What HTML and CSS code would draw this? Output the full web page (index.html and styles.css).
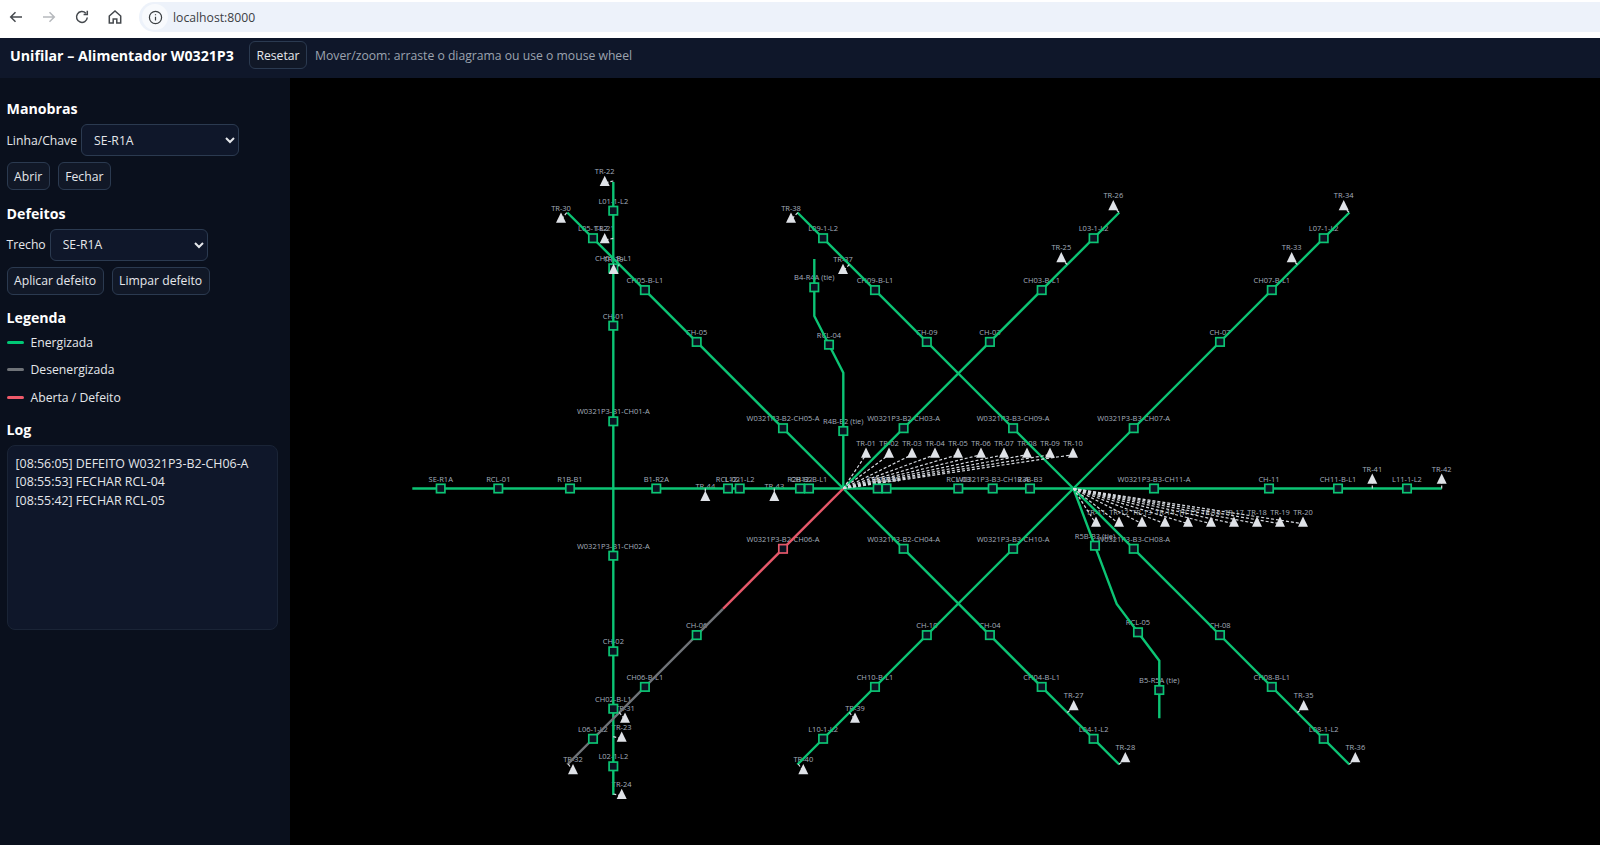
FILE: index.html
```html
<!DOCTYPE html>
<html lang="pt-BR">
<head>
    <meta charset="UTF-8">
    <meta name="viewport" content="width=device-width, initial-scale=1.0">
    <title>Unifilar - Alimentador W0321P3</title>
    <link rel="stylesheet" href="styles.css">
</head>
<body>
    <div class="browser-bar">
        <svg class="nav-icon" viewBox="0 0 16 16"><path d="M14 8H3M7.500 3.200 2.700 8l4.800 4.800"/></svg>
        <svg class="nav-icon nav-off" viewBox="0 0 16 16"><path d="M2 8h11M8.500 3.200 13.300 8l-4.800 4.800"/></svg>
        <svg class="nav-icon" viewBox="0 0 16 16"><path d="M13.300 8.500A5.400 5.400 0 1 1 11.800 4.200M13.300 1.800v3.700H9.600"/></svg>
        <svg class="nav-icon" viewBox="0 0 16 16"><path d="M2.300 7 8 2l5.700 5v7H9.800v-4H6.200v4H2.300z"/></svg>
        <div class="address">
            <span class="info-dot">
                <svg viewBox="0 0 16 16"><circle cx="8" cy="8" r="6.500"/><path d="M8 7.200v4M8 4.400v1.300"/></svg>
            </span>
            <span class="url">localhost:8000</span>
        </div>
    </div>

    <header class="topbar">
        <strong class="title">Unifilar – Alimentador W0321P3</strong>
        <button class="btn">Resetar</button>
        <span class="hint">Mover/zoom: arraste o diagrama ou use o mouse wheel</span>
    </header>

    <div class="layout">
        <aside class="sidebar">
            <section class="group">
                <h3>Manobras</h3>
                <div class="row">
                    <label for="chave">Linha/Chave</label>
                    <select id="chave" class="select-chave"><option>SE-R1A</option><option>RCL-01</option><option>R1B-B1</option></select>
                </div>
                <div class="row">
                    <button class="btn">Abrir</button>
                    <button class="btn">Fechar</button>
                </div>
            </section>

            <section class="group">
                <h3>Defeitos</h3>
                <div class="row">
                    <label for="trecho">Trecho</label>
                    <select id="trecho" class="select-trecho"><option>SE-R1A</option><option>RCL-01</option><option>R1B-B1</option></select>
                </div>
                <div class="row">
                    <button class="btn">Aplicar defeito</button>
                    <button class="btn">Limpar defeito</button>
                </div>
            </section>

            <section class="group legend">
                <h3>Legenda</h3>
                <div class="legend-item"><i class="swatch on"></i>Energizada</div>
                <div class="legend-item"><i class="swatch off"></i>Desenergizada</div>
                <div class="legend-item"><i class="swatch open"></i>Aberta / Defeito</div>
            </section>

            <section class="group">
                <h3>Log</h3>
                <div class="log">
                    <div>[08:56:05] DEFEITO W0321P3-B2-CH06-A</div>
                    <div>[08:55:53] FECHAR RCL-04</div>
                    <div>[08:55:42] FECHAR RCL-05</div>
                </div>
            </section>
        </aside>

        <main class="canvas">
            <svg id="diagram" viewBox="290 78 1310 767"></svg>
        </main>
    </div>

    <script src="app.js"></script>
</body>
</html>
```

FILE: styles.css
```css
html, body {
    height: 100%;
}
body {
    margin: 0;
    overflow: hidden;
    display: flex;
    flex-direction: column;
    font-family: "Open Sans", "Noto Sans", sans-serif;
    font-size: 12.2px;
    background-color: #000;
    color: #e5e7eb;
}
.browser-bar {
    height: 38px;
    flex: none;
    display: flex;
    align-items: center;
    box-sizing: border-box;
    padding-left: 8px;
    padding-bottom: 4px;
    background-color: #fff;
}
.nav-icon {
    width: 16px;
    height: 16px;
    margin-right: 17px;
    fill: none;
    stroke: #45494e;
    stroke-width: 1.5;
}
.nav-off {
    stroke: #b6b9bd;
}
.address {
    flex: 1;
    height: 30px;
    margin-left: -1px;
    display: flex;
    align-items: center;
    background-color: #edf2fa;
    border-radius: 15px 0 0 15px;
}
.info-dot {
    width: 26px;
    height: 26px;
    margin-left: 3px;
    display: flex;
    align-items: center;
    justify-content: center;
    border-radius: 50%;
    background-color: #f8fafd;
}
.info-dot svg {
    width: 15px;
    height: 15px;
    fill: none;
    stroke: #3c4043;
    stroke-width: 1.3;
}
.url {
    margin-left: 5px;
    font-size: 12.2px;
    color: #3c4043;
}
.topbar {
    height: 40px;
    flex: none;
    display: flex;
    align-items: center;
    gap: 8px;
    box-sizing: border-box;
    padding: 0 10px 6px;
    background-color: #0f172a;
}
.title {
    margin-right: 7px;
    font-size: 14.2px;
    color: #fff;
}
.hint {
    color: #9ca3af;
}
.layout {
    flex: 1;
    display: flex;
    min-height: 0;
}
.sidebar {
    width: 290px;
    flex: none;
    box-sizing: border-box;
    padding: 21px 12px 0 6.500px;
    background-color: #0a101d;
}
.canvas {
    flex: 1;
    background-color: #000;
}
#diagram {
    display: block;
    width: 100%;
    height: 100%;
}
.group {
    margin-bottom: 13.5px;
}
.group h3 {
    margin: 0 0 5px;
    font-size: 14.2px;
    line-height: 20px;
    font-weight: 700;
    color: #fff;
}
.row {
    display: flex;
    align-items: center;
    gap: 8px;
    margin-bottom: 6px;
}
.row label {
    margin-right: -4px;
}
.btn {
    height: 28px;
    padding: 0 6.500px;
    font-family: inherit;
    font-size: 12.2px;
    color: #e5e7eb;
    background-color: #111827;
    border: 1px solid #2b3a50;
    border-radius: 6px;
    cursor: pointer;
}
select {
    height: 32px;
    box-sizing: border-box;
    padding: 0 8px;
    font-family: inherit;
    font-size: 12.2px;
    color: #e5e7eb;
    background-color: #0f172a;
    border: 1px solid #2b3a50;
    border-radius: 6px;
    color-scheme: dark;
}
.select-chave {
    width: 158px;
}
.select-trecho {
    width: 158px;
}
.legend {
    margin-bottom: 9px;
}
.legend h3 {
    margin-bottom: 1px;
}
.legend-item {
    height: 27.3px;
    display: flex;
    align-items: center;
    gap: 7px;
}
.swatch {
    width: 17px;
    height: 3px;
    border-radius: 2px;
}
.swatch.on {
    background-color: #00c875;
}
.swatch.off {
    background-color: #6f7378;
}
.swatch.open {
    background-color: #ef5a6a;
}
.log {
    width: 271px;
    height: 185px;
    box-sizing: border-box;
    padding: 9px 8px;
    font-size: 12.4px;
    line-height: 18.4px;
    background-color: #0f172a;
    border: 1px solid #1a2436;
    border-radius: 8px;
}
.lbl {
    font-family: "Open Sans", sans-serif;
    font-size: 7.5px;
    text-anchor: middle;
    fill: #a5afbd;
}
.wire {
    fill: none;
    stroke: #0cc474;
    stroke-width: 2.4;
}
.wire.off {
    stroke: #6f7378;
}
.wire.open {
    stroke: #e5586a;
}
.tick {
    fill: none;
    stroke: #d8dce2;
    stroke-width: 1.2;
    stroke-dasharray: 3 2;
}
.node {
    fill: #0b1220;
    stroke: #0cc474;
    stroke-width: 1.7;
}
.node.open {
    stroke: #e5586a;
}
.tri {
    fill: #dfe2e7;
}
```

FILE: app.js
```js
const NS = 'http://www.w3.org/2000/svg';
const svg = document.getElementById('diagram');
const layers = {};
['lbl', 'wire', 'tick', 'node', 'tri'].forEach(function (name) {
    layers[name] = svg.appendChild(document.createElementNS(NS, 'g'));
});

function add(layer, tag, attrs, text) {
    const el = document.createElementNS(NS, tag);
    for (const key in attrs) el.setAttribute(key, attrs[key]);
    if (text) el.textContent = text;
    layers[layer].appendChild(el);
}

function wire(points, state) {
    add('wire', 'polyline', { class: 'wire ' + (state || ''), points: points.map(p => p.join(',')).join(' ') });
}

function node(x, y, name, state, labelGap) {
    add('lbl', 'text', { class: 'lbl', x: x, y: y - (labelGap || 7) }, name);
    add('node', 'rect', { class: 'node ' + (state || ''), x: x - 4.2, y: y - 4.2, width: 8.4, height: 8.4 });
}

function trafo(num, x, y, tx, ty) {
    const name = 'TR-' + String(num).padStart(2, '0');
    add('lbl', 'text', { class: 'lbl', x: x, y: y - 7 }, name);
    add('tick', 'line', { class: 'tick', x1: tx, y1: ty, x2: x, y2: y + 2 });
    add('tri', 'polygon', { class: 'tri', points: `${x},${y - 5.3} ${x + 5},${y + 5} ${x - 5},${y + 5}` });
}

const MAIN_Y = 488.5;
const HUB_A = 843.3;
const HUB_B = 1073.4;
const DIAG = [60.3, 146.6, 198.4, 250.3];
const DIAG_END = 276;

// barra principal
wire([[412.3, MAIN_Y], [1441.7, MAIN_Y]]);
[
    [440.7, 'SE-R1A'], [498.3, 'RCL-01'], [570, 'R1B-B1'], [656.3, 'B1-R2A'], [728, 'RCL-02'],
    [739.7, 'L12-1-L2'], [800, 'R2B-B2'], [809, 'CH12-B-L1'], [877.7, 'CH-12'], [886.5, 'B2-R3A'],
    [958.3, 'RCL-03'], [992.7, 'W0321P3-B3-CH12-A'], [1030, 'R3B-B3'], [1154, 'W0321P3-B3-CH11-A'],
    [1269, 'CH-11'], [1338, 'CH11-B-L1'], [1407, 'L11-1-L2']
].forEach(n => node(n[0], MAIN_Y, n[1]));

// ramal vertical CH01 / CH02
const CX = 613.3;
wire([[CX, 182], [CX, 795]]);
[[1, -1], [2, 1]].forEach(function (r) {
    const id = '0' + r[0];
    const y = d => MAIN_Y + r[1] * d;
    node(CX, y(67.2), 'W0321P3-B1-CH' + id + '-A');
    node(CX, y(162.8), 'CH-' + id);
    node(CX, y(220.2), 'CH' + id + '-B-L1');
    node(CX, y(277.8), 'L' + id + '-1-L2');
});

// ramais diagonais: id, barra, sinal x, sinal y
[
    ['03', 'B2', HUB_A, 1, -1], ['04', 'B2', HUB_A, 1, 1], ['05', 'B2', HUB_A, -1, -1], ['06', 'B2', HUB_A, -1, 1],
    ['07', 'B3', HUB_B, 1, -1], ['08', 'B3', HUB_B, 1, 1], ['09', 'B3', HUB_B, -1, -1], ['10', 'B3', HUB_B, -1, 1]
].forEach(function (b) {
    const id = b[0], hub = b[2], sx = b[3], sy = b[4];
    const at = d => [hub + sx * d, MAIN_Y + sy * d];
    if (id === '06') {
        wire([at(0), at(120.3)], 'open');
        wire([at(120.3), at(DIAG_END)], 'off');
    } else {
        wire([at(0), at(DIAG_END)]);
    }
    const names = ['W0321P3-' + b[1] + '-CH' + id + '-A', 'CH-' + id, 'CH' + id + '-B-L1', 'L' + id + '-1-L2'];
    names.forEach(function (name, i) {
        const p = at(DIAG[i]);
        node(p[0], p[1], name, id === '06' && i === 0 ? 'open' : '');
    });
});

// interligações
wire([[814.3, 259], [814.3, 316], [843.3, 372.7], [843.3, MAIN_Y]]);
node(814.3, 287.3, 'B4-R4A (tie)');
node(829, 344.7, 'RCL-04');
node(843.3, 431, 'R4B-B2 (tie)');
wire([[HUB_B, MAIN_Y], [1116.7, 604], [1159.3, 660.7], [1159.3, 718.3]]);
node(1095, 545.7, 'R5B-B3 (tie)');
node(1138, 632.3, 'RCL-05');
node(1159.3, 690, 'B5-R5A (tie)');

// transformadores: número, x, y, ponto de ligação
[
    [21, 604.7, 238.3, CX, 238.3], [22, 604.7, 181, CX, 181], [23, 621.7, 736.7, CX, 736.7], [24, 621.7, 794, CX, 794],
    [25, 1061.3, 257.3, 1067.3, 264.5], [26, 1113.3, 205.3, 1119, 212.3], [27, 1073.7, 705.3, 1067.3, 712.5],
    [28, 1125.3, 757.3, 1119, 764.3], [29, 613.6, 269, 619.3, 264.5], [30, 561, 217.7, 566.7, 212.7],
    [31, 625, 717.7, 619.3, 712.5], [32, 573, 769.3, 568.3, 764], [33, 1291.7, 257.3, 1297.4, 264.5],
    [34, 1343.7, 205.3, 1349, 212.3], [35, 1303.7, 705.3, 1297.4, 712.5], [36, 1355.3, 757.3, 1349.3, 764.3],
    [37, 843, 269, 849.4, 264.5], [38, 791, 217.7, 797.7, 212.7], [39, 855, 717.7, 849.4, 712.5],
    [40, 803.3, 769.3, 798.3, 764], [41, 1372.3, 478.7, 1372.3, MAIN_Y], [42, 1441.7, 478.7, 1441.7, MAIN_Y],
    [43, 774.3, 496, 774.3, MAIN_Y], [44, 705.3, 496, 705.3, MAIN_Y]
].forEach(t => trafo(t[0], t[1], t[2], t[3], t[4]));

// leque de transformadores nas barras
for (let i = 0; i < 10; i++) {
    trafo(i + 1, 866 + i * 23, 452.7, HUB_A, MAIN_Y);
    trafo(i + 11, 1096 + i * 23, 521.7, HUB_B, MAIN_Y);
}
```
